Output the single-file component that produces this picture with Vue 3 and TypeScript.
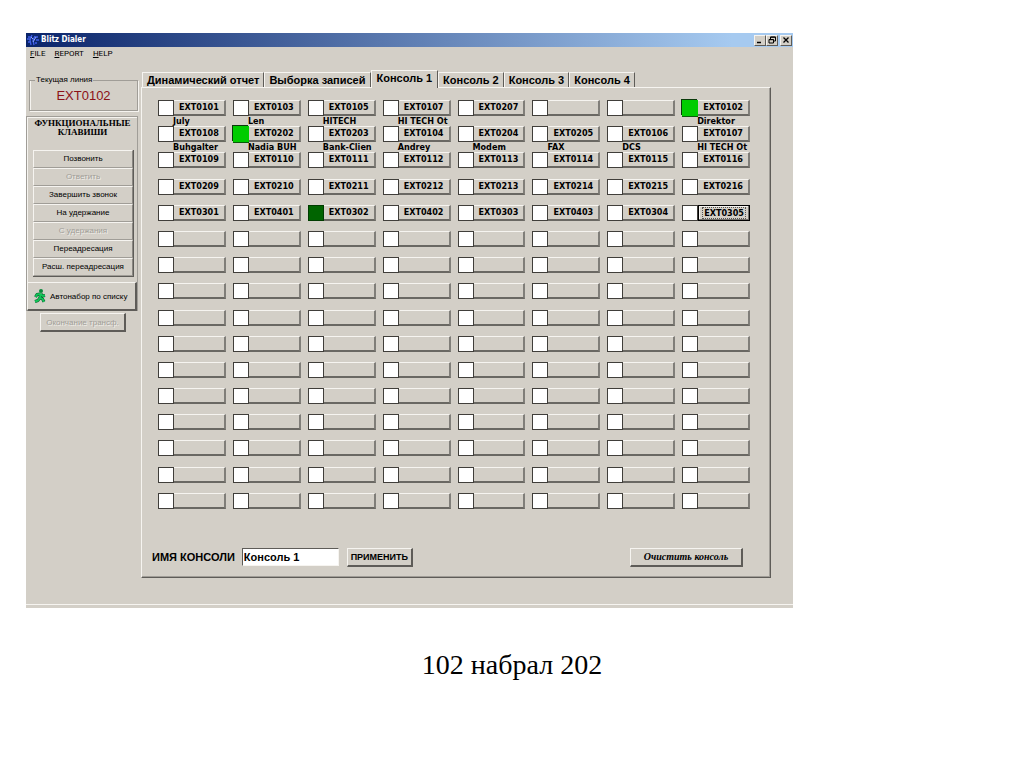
<script setup lang="ts">
import { computed, ref } from 'vue'

type Line = { ext: string; name?: string; state?: 'ringing' | 'busy' }

const menus = ['FILE', 'REPORT', 'HELP']

const tabs = [
  'Динамический отчет',
  'Выборка записей',
  'Консоль 1',
  'Консоль 2',
  'Консоль 3',
  'Консоль 4',
]
const activeTab = ref('Консоль 1')
const consoleName = ref('Консоль 1')
const focusedExt = 'EXT0305'

const actions = [
  { label: 'Позвонить', off: false },
  { label: 'Ответить', off: true },
  { label: 'Завершить звонок', off: false },
  { label: 'На удержание', off: false },
  { label: 'С удержания', off: true },
  { label: 'Переадресация', off: false },
  { label: 'Расш. переадресация', off: false },
]

const assigned: Line[] = [
  { ext: 'EXT0101', name: 'July' },
  { ext: 'EXT0103', name: 'Len' },
  { ext: 'EXT0105', name: 'HITECH' },
  { ext: 'EXT0107', name: 'HI TECH Ot' },
  { ext: 'EXT0207' },
  { ext: '' },
  { ext: '' },
  { ext: 'EXT0102', name: 'Direktor', state: 'ringing' },
  { ext: 'EXT0108', name: 'Buhgalter' },
  { ext: 'EXT0202', name: 'Nadia BUH', state: 'ringing' },
  { ext: 'EXT0203', name: 'Bank-Clien' },
  { ext: 'EXT0104', name: 'Andrey' },
  { ext: 'EXT0204', name: 'Modem' },
  { ext: 'EXT0205', name: 'FAX' },
  { ext: 'EXT0106', name: 'DCS' },
  { ext: 'EXT0107', name: 'HI TECH Ot' },
  ...['0109', '0110', '0111', '0112', '0113', '0114', '0115', '0116'].map((n) => ({ ext: 'EXT' + n })),
  ...['0209', '0210', '0211', '0212', '0213', '0214', '0215', '0216'].map((n) => ({ ext: 'EXT' + n })),
  { ext: 'EXT0301' },
  { ext: 'EXT0401' },
  { ext: 'EXT0302', state: 'busy' },
  { ext: 'EXT0402' },
  { ext: 'EXT0303' },
  { ext: 'EXT0403' },
  { ext: 'EXT0304' },
  { ext: 'EXT0305' },
]

const lines = computed<Line[]>(() =>
  Array.from({ length: 128 }, (_, i) => assigned[i] ?? { ext: '' }),
)
</script>

<template>
  <main class="slide">
    <section class="window">
      <header class="titlebar">
        <svg class="app-icon" viewBox="0 0 12 12" aria-hidden="true">
          <path d="M1 3h3M0 5h4M1 8h3M5 1L3 6L4 11M8 2L6 6L7 11M8 3h3M9 6h3M8 9h2" stroke="#3f5fe8" stroke-width="1.3" fill="none" />
          <path d="M4 3l2 2M6 8l3-5" stroke="#8fa6ff" stroke-width="1" fill="none" />
        </svg>
        <h1 class="title">Blitz Dialer</h1>
        <button class="sys" type="button" aria-label="Minimize">
          <svg viewBox="0 0 8 8"><path d="M1 6.5h4" stroke="#000" stroke-width="1.5" /></svg>
        </button>
        <button class="sys" type="button" aria-label="Restore">
          <svg viewBox="0 0 8 8">
            <path d="M2.5 3V1h5v4H6M2.5 1.2h5M1 3.5h4.5v3.5H1zM1 3.7h4.5" stroke="#000" fill="none" />
          </svg>
        </button>
        <button class="sys close" type="button" aria-label="Close">
          <svg viewBox="0 0 8 8"><path d="M1.5 1.5l5 5M6.5 1.5l-5 5" stroke="#000" stroke-width="1.3" /></svg>
        </button>
      </header>

      <nav class="menu">
        <button v-for="m in menus" :key="m" type="button"><u>{{ m[0] }}</u>{{ m.slice(1) }}</button>
      </nav>

      <div class="body">
        <aside class="side">
          <fieldset class="current">
            <legend>Текущая линия</legend>
            <output>EXT0102</output>
          </fieldset>

          <section class="functions">
            <h2>ФУНКЦИОНАЛЬНЫЕ КЛАВИШИ</h2>
            <div class="actions">
              <button v-for="a in actions" :key="a.label" type="button" :disabled="a.off">{{ a.label }}</button>
            </div>
            <button class="auto" type="button">
              <svg viewBox="0 0 12 14" aria-hidden="true">
                <circle cx="7" cy="2" r="2" fill="#0a8a3c" />
                <path
                  d="M6.5 4.5L6 9M6 5L3 5.5L1.5 8M7 5L8.5 7L11 6.5M6 8.5L8.5 10L10 12.8M6 8.5L4 11.5L1 12.5"
                  stroke="#075c2a" stroke-width="3" fill="none" stroke-linejoin="round"
                />
                <path
                  d="M6.5 4.5L6 9M6 5L3 5.5L1.5 8M7 5L8.5 7L11 6.5M6 8.5L8.5 10L10 12.8M6 8.5L4 11.5L1 12.5"
                  stroke="#12c458" stroke-width="1.9" fill="none" stroke-linejoin="round"
                />
              </svg>
              <span>Автонабор по списку</span>
            </button>
          </section>
          <button class="finish" type="button" disabled>Окончание трансф.</button>
        </aside>

        <section class="work">
          <div class="tabs" role="tablist">
            <button
              v-for="t in tabs"
              :key="t"
              type="button"
              role="tab"
              :aria-selected="t === activeTab"
              :class="{ active: t === activeTab }"
              @click="activeTab = t"
            >{{ t }}</button>
          </div>

          <div class="panel" role="tabpanel">
            <div class="grid">
              <div v-for="(l, i) in lines" :key="i" class="cell">
                <div class="line">
                  <span class="led" :class="l.state"></span>
                  <button
                    type="button"
                    :class="{ focused: l.ext === focusedExt }"
                    :aria-label="l.ext || 'Line ' + (i + 1)"
                  ><span v-if="l.ext">{{ l.ext }}</span></button>
                </div>
                <span v-if="l.name" class="name">{{ l.name }}</span>
              </div>
            </div>

            <form class="footer" @submit.prevent>
              <label for="console-name">ИМЯ КОНСОЛИ</label>
              <input id="console-name" v-model="consoleName" type="text" />
              <button class="apply" type="submit">ПРИМЕНИТЬ</button>
              <button class="clear" type="button">Очистить консоль</button>
            </form>
          </div>
        </section>
      </div>

      <footer class="status"></footer>
    </section>

    <p class="caption">102 набрал 202</p>
  </main>
</template>

<style>
body {
  background: #fff;
}
</style>

<style scoped>
.slide {
  padding-top: 33px;
  font-family: "Liberation Sans", Arial, sans-serif;
  color: #000;
}

.slide *,
.slide {
  box-sizing: border-box;
}

button {
  margin: 0;
  padding: 0;
  font: inherit;
  color: inherit;
  background: #d3cfc7;
  border: 1px solid;
  border-color: #f6f4f0 #5e5c58 #5e5c58 #f6f4f0;
  border-radius: 0;
  white-space: nowrap;
}

button:disabled {
  color: #a09d97;
  text-shadow: 1px 1px 0 #efede8;
}

.window {
  margin: 0 231px 0 26px;
  background: #d3cfc7;
}

.titlebar {
  display: flex;
  align-items: center;
  height: 14px;
  padding: 0 1px;
  background: linear-gradient(90deg, #0a246a, #a6caf0 92%);
}

.app-icon {
  width: 12px;
  height: 12px;
  margin-right: 2px;
}

.title {
  flex: 1;
  margin: 0;
  font: bold 8px/14px "DejaVu Sans Condensed", "DejaVu Sans", sans-serif;
  color: #fff;
}

.sys {
  display: flex;
  align-items: center;
  justify-content: center;
  width: 12px;
  height: 11px;
}

.sys svg {
  width: 8px;
  height: 8px;
}

.close {
  margin-left: 2px;
}

.menu {
  display: flex;
  gap: 9px;
  height: 23px;
  padding: 1px 4px;
}

.menu button {
  height: 12px;
  border: 0;
  font: 8px/12px Roboto, sans-serif;
}

.body {
  display: flex;
  gap: 3px;
}

.side {
  flex: 0 0 112px;
  padding-top: 5px;
}

.current {
  height: 36px;
  margin: 0 0 5px 3px;
  padding: 0;
  border: 1px solid #a09d97;
  box-shadow: inset 1px 0 0 #f6f4f0, 1px 1px 0 #f6f4f0;
}

.current legend {
  margin-left: 5px;
  padding: 0 1px;
  font-size: 8px;
  line-height: 10px;
}

.current output {
  display: block;
  padding-top: 3px;
  font-size: 13px;
  line-height: 16px;
  text-align: center;
  color: #8c1016;
}

.functions {
  border: 1px solid #a09d97;
  border-bottom: 0;
  box-shadow: inset 1px 1px 0 #f6f4f0;
  padding-top: 2px;
}

.functions h2 {
  margin: 0 4px 13px 5px;
  font: bold 9px/9px "Liberation Serif", serif;
  text-align: center;
}

.actions {
  display: flex;
  flex-direction: column;
  margin: 0 3px 5px 6px;
  border-right: 1px solid #5e5c58;
  border-bottom: 1px solid #5e5c58;
}

.actions button {
  height: 18px;
  border-color: #f6f4f0 #8a8782 #a09d97 #f6f4f0;
  font-size: 8px;
  line-height: 16px;
}

.auto {
  display: flex;
  align-items: center;
  gap: 4px;
  width: 100%;
  height: 29px;
  padding: 0 0 0 6px;
  border-width: 1px 2px 2px 1px;
  font-size: 8px;
}

.auto svg {
  flex: none;
  width: 12px;
  height: 14px;
}

.finish {
  display: block;
  width: 86px;
  height: 19px;
  margin: 2px auto 0 14px;
  border-width: 1px 2px 2px 1px;
  font-size: 8px;
}

.work {
  flex: 1;
  min-width: 0;
  margin-right: 22px;
}

.tabs {
  display: flex;
  align-items: flex-end;
  height: 17px;
  padding-left: 1px;
}

.tabs button {
  height: 15px;
  padding: 0 4px;
  border-width: 1px 1px 0;
  font-size: 11px;
  font-weight: bold;
  line-height: 14px;
}

.tabs .active {
  height: 18px;
  margin-bottom: -1px;
  padding: 0 5px 3px;
  position: relative;
}

.panel {
  padding: 12px 20px 10px 16px;
  border: 1px solid;
  border-color: #f6f4f0 #5e5c58 #5e5c58 #f6f4f0;
  box-shadow: inset -1px -1px 0 #a09d97;
}

.grid {
  display: grid;
  grid-template-columns: repeat(8, minmax(0, 1fr));
  grid-template-rows: repeat(16, 1fr);
  column-gap: 7px;
  height: 419px;
}

.line {
  display: flex;
  height: 16px;
}

.led {
  flex: none;
  width: 16px;
  background: #fff;
  border: 1px solid #403e3a;
}

.led.ringing {
  background: #00cc00;
  border-color: #00cc00;
  box-shadow: -1px -1px 0 #0a3a0a, 0 1px 0 #0a5a0a;
}

.led.busy {
  background: #006400;
  border-color: #003c00;
}

.line button {
  flex: 1;
  min-width: 0;
  border-width: 1px 2px 2px 0;
  border-color: #f6f4f0 #807e79 #6a6863;
  font: bold 9px/13px "DejaVu Sans Condensed", "DejaVu Sans", sans-serif;
}

.line .focused {
  border: 1px solid #000;
  box-shadow: inset -1px -1px 0 #73716c, inset 1px 1px 0 #f6f4f0;
}

.focused span {
  display: block;
  margin: 0 4px;
  line-height: 10px;
  outline: 1px dotted #55534f;
}

.name {
  display: block;
  margin-left: 15px;
  font: bold 9px/10px "DejaVu Sans Condensed", "DejaVu Sans", sans-serif;
  white-space: nowrap;
}

.footer {
  display: flex;
  align-items: center;
  height: 20px;
  margin: 28px 7px 0 -6px;
}

.footer label {
  font-size: 11px;
  font-weight: bold;
}

.footer input {
  width: 97px;
  height: 18px;
  margin: 0 8px 0 7px;
  padding: 0 1px;
  border: 1px solid;
  border-color: #5e5c58 #f6f4f0 #f6f4f0 #5e5c58;
  border-radius: 0;
  background: #fff;
  font: bold 11px/14px "Liberation Sans", Arial, sans-serif;
}

.apply,
.clear {
  height: 19px;
  border-width: 1px 2px 2px 1px;
}

.apply {
  width: 66px;
  font-size: 9px;
  font-weight: bold;
}

.clear {
  width: 113px;
  margin-left: auto;
  font: italic bold 10px/14px "Liberation Serif", serif;
}

.status {
  height: 4px;
  margin-top: 26px;
  border-top: 1px solid #f6f4f0;
}

.caption {
  margin: 41px 0 0;
  font: 28px/32px "Liberation Serif", "Times New Roman", serif;
  text-align: center;
}
</style>
